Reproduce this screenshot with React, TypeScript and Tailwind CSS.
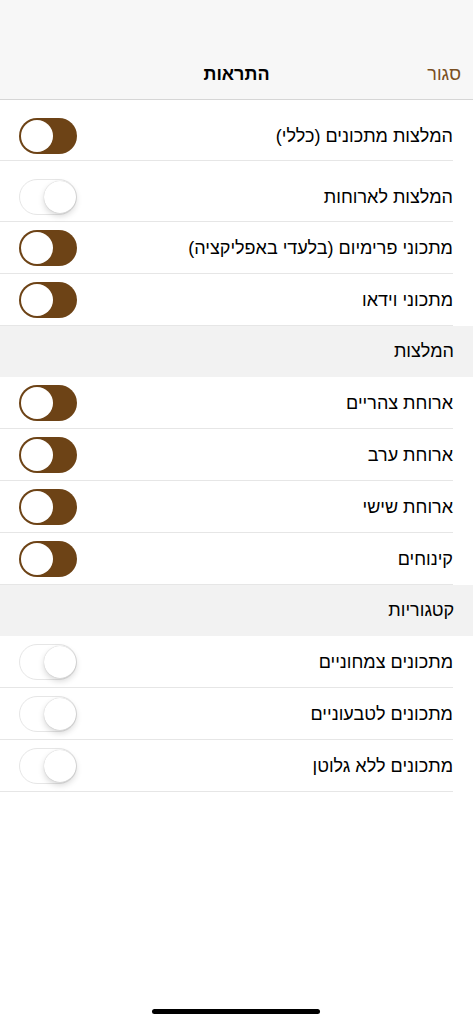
import React, { useState } from 'react';

type Row = { id: string; label: string; on: boolean; tall?: boolean };
type Section = { title?: string; rows: Row[] };

const initial: Section[] = [
  {
    rows: [
      { id: 'general', label: 'המלצות מתכונים (כללי)', on: true, tall: true },
      { id: 'meals', label: 'המלצות לארוחות', on: false, tall: true },
      { id: 'premium', label: 'מתכוני פרימיום (בלעדי באפליקציה)', on: true },
      { id: 'video', label: 'מתכוני וידאו', on: true },
    ],
  },
  {
    title: 'המלצות',
    rows: [
      { id: 'lunch', label: 'ארוחת צהריים', on: true },
      { id: 'dinner', label: 'ארוחת ערב', on: true },
      { id: 'friday', label: 'ארוחת שישי', on: true },
      { id: 'dessert', label: 'קינוחים', on: true },
    ],
  },
  {
    title: 'קטגוריות',
    rows: [
      { id: 'veg', label: 'מתכונים צמחוניים', on: false },
      { id: 'vegan', label: 'מתכונים לטבעוניים', on: false },
      { id: 'gluten', label: 'מתכונים ללא גלוטן', on: false },
    ],
  },
];

const Toggle: React.FC<{ on: boolean; onClick: () => void }> = ({ on, onClick }) => (
  <button
    dir="ltr"
    onClick={onClick}
    className={`flex items-center w-[58px] h-[36px] shrink-0 rounded-full ${
      on ? 'bg-[#6d4316] justify-start p-[2px]' : 'bg-white border-[1.5px] border-[#e6e6e6] justify-end'
    }`}
  >
    <span
      className={`block rounded-full bg-white w-[32px] h-[32px] ${
        on ? '' : 'shadow-[0_3px_6px_rgba(0,0,0,0.16),0_0_1px_rgba(0,0,0,0.25)]'
      }`}
    />
  </button>
);

export default function App() {
  const [sections, setSections] = useState(initial);

  const flip = (id: string) =>
    setSections(s =>
      s.map(sec => ({ ...sec, rows: sec.rows.map(r => (r.id === id ? { ...r, on: !r.on } : r)) }))
    );

  return (
    <div
      dir="rtl"
      className="relative h-[1024px] w-full bg-white text-black overflow-hidden"
      style={{ fontFamily: '"Liberation Sans", "DejaVu Sans", sans-serif' }}
    >
      <div className="h-[100px] bg-[#f7f7f7] border-b border-[#d6d6d6] flex flex-col justify-end">
        <div className="h-[50px] grid grid-cols-3 items-center">
          <button className="justify-self-start pr-[12px] text-[18px] text-[#7a4f22]">סגור</button>
          <h1 className="justify-self-center text-[18px] font-bold">התראות</h1>
          <span />
        </div>
      </div>

      {sections.map((sec, i) => (
        <div key={i}>
          {sec.title && (
            <div className="h-[51px] bg-[#f2f2f2] flex items-center pr-[19px] text-[18px]">{sec.title}</div>
          )}
          {sec.rows.map(r => (
            <div
              key={r.id}
              className={`mr-[20px] border-b border-[#e6e6e6] flex items-center justify-between pl-[19px] ${
                r.tall ? 'h-[61px] pt-[11px]' : 'h-[52px]'
              }`}
            >
              <span className="text-[18px] leading-none">{r.label}</span>
              <Toggle on={r.on} onClick={() => flip(r.id)} />
            </div>
          ))}
        </div>
      ))}

      <div className="absolute bottom-[10px] left-[152px] w-[168px] h-[5px] rounded-full bg-black" />
    </div>
  );
}
